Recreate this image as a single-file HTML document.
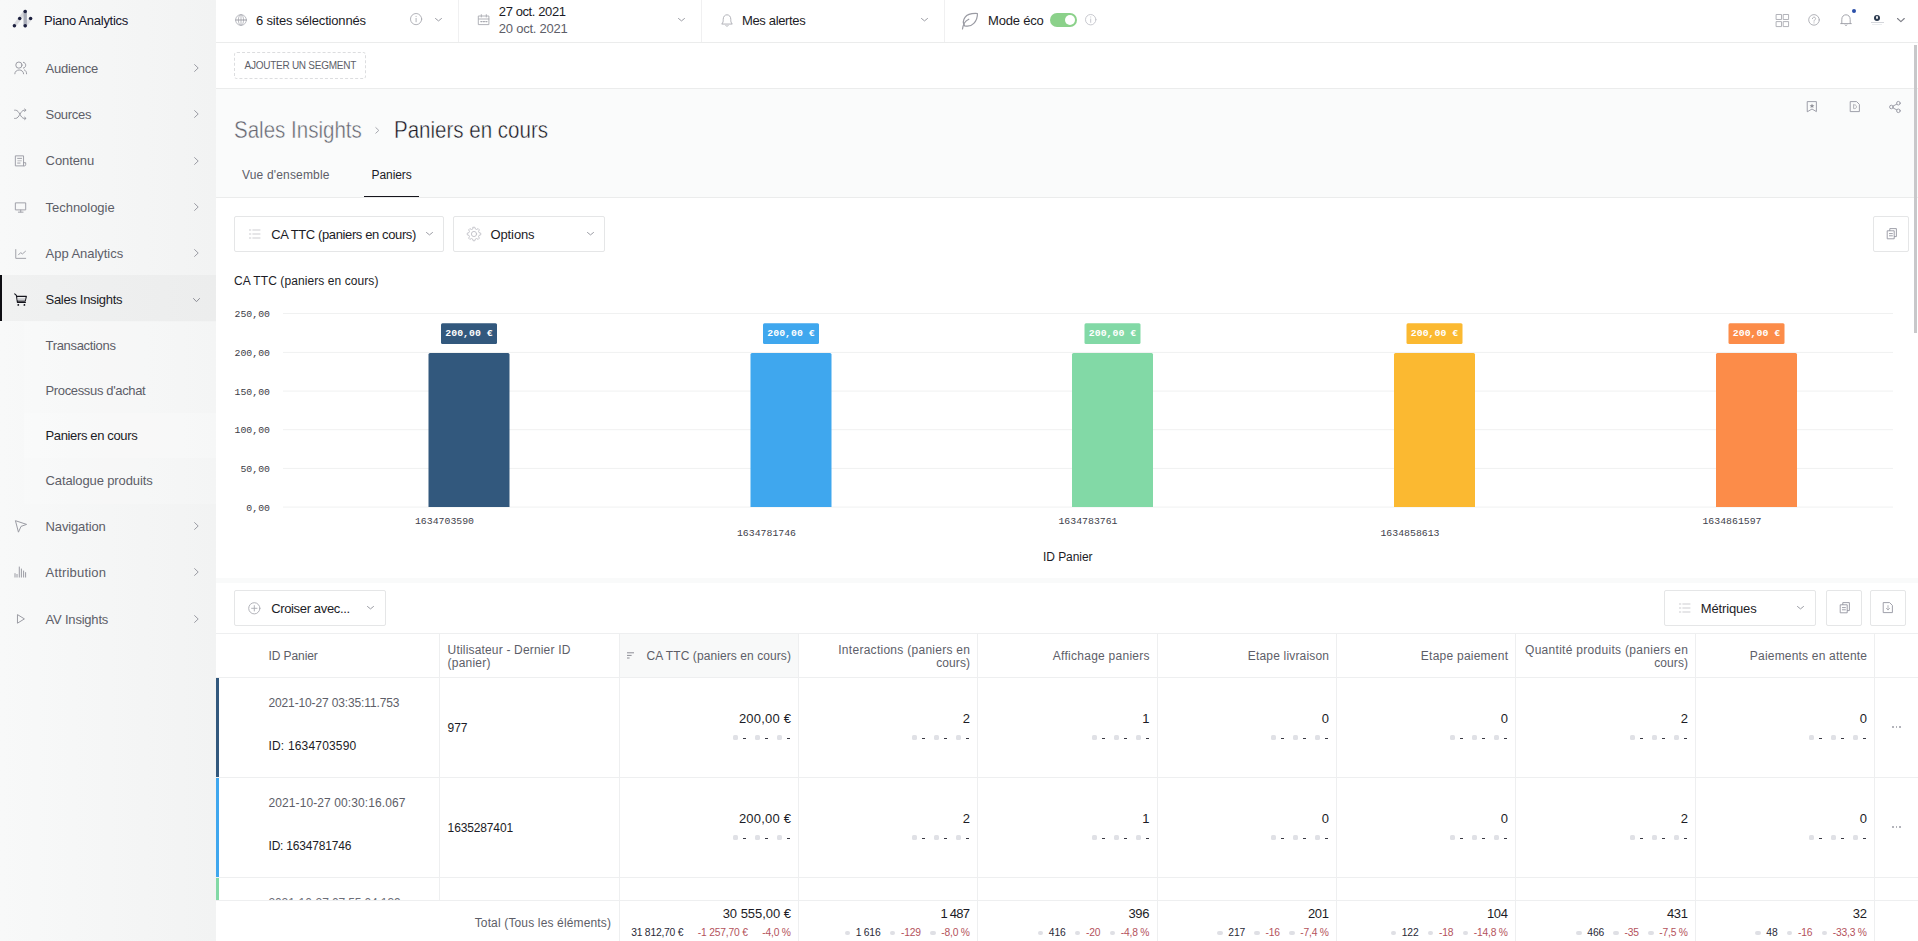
<!DOCTYPE html><html lang="fr"><head><meta charset="utf-8"><title>Piano Analytics - Paniers en cours</title><style>
*{box-sizing:border-box;margin:0;padding:0}
html,body{width:1918px;height:941px;overflow:hidden;background:#fff}
body{font-family:"Liberation Sans",sans-serif;font-size:13px;color:#1c1c26;position:relative}
.a{position:absolute}
.t{position:absolute;white-space:nowrap;line-height:1}
.box{position:absolute;border:1px solid #e5e6e7;border-radius:2px;background:#fff}
svg{position:absolute;overflow:visible}
.vl{position:absolute;width:1px;background:#eeeff0}
.hl{position:absolute;height:1px;background:#ebecec}
.i{fill:none;stroke:#9b9ca4;stroke-width:1;stroke-linecap:round;stroke-linejoin:round}
</style></head><body>
<aside><nav>
<div class="a" style="left:0;top:0;width:216px;height:941px;background:linear-gradient(90deg,#f8f9f9 0%,#f2f3f3 100%)"></div>
<div class="a" style="left:0;top:275px;width:216px;height:46px;background:linear-gradient(90deg,#f0f1f1,#eceded)"></div>
<div class="a" style="left:0;top:275px;width:2px;height:46px;background:#0d0d12"></div>
<div class="a" style="left:24px;top:322px;width:192px;height:182px;background:rgba(255,255,255,.2)"></div>
<div class="a" style="left:24px;top:413px;width:192px;height:45px;background:rgba(255,255,255,.22)"></div>
<svg style="left:10px;top:6px" width="26" height="24" viewBox="0 0 26 24">
<path d="M4.4 19.7 L15.2 5.4" stroke="#d9dade" stroke-width="3.4" stroke-linecap="round"/>
<path d="M15.2 19.7 L20.6 12.5" stroke="#dfe0e4" stroke-width="3.4" stroke-linecap="round"/>
<path d="M15.2 5.4 L15.2 19.7" stroke="#a9adb9" stroke-width="3.4" stroke-linecap="round"/>
<g fill="#1d2140"><circle cx="15.2" cy="5.4" r="1.75"/><circle cx="9.7" cy="12.5" r="1.75"/><circle cx="20.6" cy="12.5" r="1.75"/><circle cx="4.4" cy="19.7" r="1.75"/><circle cx="15.2" cy="19.7" r="1.75"/></g></svg>
<div class="t" style="top:14.20px;font-size:13px;color:#15152a;letter-spacing:-0.278px;left:44.00px;">Piano Analytics</div>
<div class="t" style="top:61.80px;font-size:13px;color:#5d5e68;letter-spacing:-0.215px;left:45.60px;">Audience</div>
<svg style="left:194.1px;top:64.0px" width="5" height="8" viewBox="0 0 5 8"><path class="i" style="stroke:#9b9ca4" d="M0.6 0.6 L4.2 4 L0.6 7.4"/></svg>
<div class="t" style="top:108.00px;font-size:13px;color:#5d5e68;letter-spacing:-0.315px;left:45.60px;">Sources</div>
<svg style="left:194.1px;top:110.2px" width="5" height="8" viewBox="0 0 5 8"><path class="i" style="stroke:#9b9ca4" d="M0.6 0.6 L4.2 4 L0.6 7.4"/></svg>
<div class="t" style="top:154.30px;font-size:13px;color:#5d5e68;letter-spacing:-0.094px;left:45.60px;">Contenu</div>
<svg style="left:194.1px;top:156.5px" width="5" height="8" viewBox="0 0 5 8"><path class="i" style="stroke:#9b9ca4" d="M0.6 0.6 L4.2 4 L0.6 7.4"/></svg>
<div class="t" style="top:200.70px;font-size:13px;color:#5d5e68;letter-spacing:-0.036px;left:45.60px;">Technologie</div>
<svg style="left:194.1px;top:202.89999999999998px" width="5" height="8" viewBox="0 0 5 8"><path class="i" style="stroke:#9b9ca4" d="M0.6 0.6 L4.2 4 L0.6 7.4"/></svg>
<div class="t" style="top:246.90px;font-size:13px;color:#5d5e68;letter-spacing:-0.042px;left:45.60px;">App Analytics</div>
<svg style="left:194.1px;top:249.1px" width="5" height="8" viewBox="0 0 5 8"><path class="i" style="stroke:#9b9ca4" d="M0.6 0.6 L4.2 4 L0.6 7.4"/></svg>
<div class="t" style="top:293.10px;font-size:13px;color:#1c1c26;letter-spacing:-0.310px;left:45.60px;">Sales Insights</div>
<svg style="left:193.00px;top:298.30px" width="7" height="4.2" viewBox="0 0 7 4.2"><path class="i" style="stroke:#8d8e96;stroke-width:1" d="M0.5 0.5 L3.5 3.7 L6.5 0.5"/></svg>
<div class="t" style="top:519.70px;font-size:13px;color:#5d5e68;letter-spacing:-0.144px;left:45.60px;">Navigation</div>
<svg style="left:194.1px;top:521.9000000000001px" width="5" height="8" viewBox="0 0 5 8"><path class="i" style="stroke:#9b9ca4" d="M0.6 0.6 L4.2 4 L0.6 7.4"/></svg>
<div class="t" style="top:565.90px;font-size:13px;color:#5d5e68;letter-spacing:0.178px;left:45.60px;">Attribution</div>
<svg style="left:194.1px;top:568.1px" width="5" height="8" viewBox="0 0 5 8"><path class="i" style="stroke:#9b9ca4" d="M0.6 0.6 L4.2 4 L0.6 7.4"/></svg>
<div class="t" style="top:612.50px;font-size:13px;color:#5d5e68;letter-spacing:-0.209px;left:45.60px;">AV Insights</div>
<svg style="left:194.1px;top:614.7px" width="5" height="8" viewBox="0 0 5 8"><path class="i" style="stroke:#9b9ca4" d="M0.6 0.6 L4.2 4 L0.6 7.4"/></svg>
<div class="t" style="top:339.10px;font-size:13px;color:#5d5e68;letter-spacing:-0.320px;left:45.50px;">Transactions</div>
<div class="t" style="top:384.10px;font-size:13px;color:#5d5e68;letter-spacing:-0.349px;left:45.50px;">Processus d'achat</div>
<div class="t" style="top:429.10px;font-size:13px;color:#1c1c26;letter-spacing:-0.360px;left:45.50px;">Paniers en cours</div>
<div class="t" style="top:474.10px;font-size:13px;color:#5d5e68;letter-spacing:-0.113px;left:45.50px;">Catalogue produits</div>
<svg style="left:14px;top:61px" width="14" height="14" viewBox="0 0 14 14"><circle class="i" cx="4.9" cy="4.1" r="3.1"/><path class="i" d="M0.8 12.8 C0.8 7.6 9.6 7.6 9.6 12.8"/><path class="i" d="M9.4 1.3 C12.6 1.6 12.6 6.8 9.4 7.1"/><path class="i" d="M10.4 8.9 C11.9 9.6 12.6 11 12.6 12.8"/></svg>
<svg style="left:14px;top:107.5px" width="14" height="13" viewBox="0 0 14 13"><path class="i" d="M0.6 2.2 H1.6 C5.4 2.2 6.4 10.4 10.2 10.4 H11.8"/><path class="i" d="M0.6 10.4 H1.6 C5.4 10.4 6.4 2.2 10.2 2.2 H11.8"/><path class="i" d="M10.6 1 L12 2.2 L10.6 3.4"/><path class="i" d="M10.6 9.2 L12 10.4 L10.6 11.6"/></svg>
<svg style="left:14.6px;top:155px" width="12.2" height="12.2" viewBox="0 0 13 13"><path class="i" d="M0.8 0.9 H9.1 V11.6 H0.8 Z"/><path class="i" d="M9.1 8.2 H11.4 V10.4 C11.4 11.2 10.8 11.6 10.2 11.6 H9.1"/><path class="i" d="M2.8 3.6 H7 M2.8 8.6 H5.4"/><path d="M2.6 5.4 H7.2 V6.8 H2.6 Z" fill="#c9cace"/></svg>
<svg style="left:14.6px;top:201.8px" width="12.2" height="11.3" viewBox="0 0 13 12"><path class="i" d="M0.8 0.9 H11.4 V8.4 H0.8 Z"/><path class="i" d="M6.1 8.6 V10.6 M3.6 10.8 H8.6"/></svg>
<svg style="left:14.6px;top:248.6px" width="12.2" height="10.3" viewBox="0 0 13 11"><path class="i" d="M0.8 0.6 V10 H11.4"/><path class="i" d="M3.8 6.2 L6 3.9 L7.9 5.3 L11.2 2.4"/></svg>
<svg style="left:13.5px;top:293.4px" width="14" height="14" viewBox="0 0 14 14"><path d="M0.7 0.8 L2.4 2.4 L3.4 9.4 H11.4 M2.6 3.4 H12.4 L11.2 8 H3.2" fill="none" stroke="#14141c" stroke-width="1.1" stroke-linejoin="round" stroke-linecap="round"/><path d="M3.6 5.2 H11.4 L11 7.2 H3.8Z" fill="#c9cace"/><circle cx="4.3" cy="11.9" r="0.9" fill="#14141c"/><circle cx="10.4" cy="11.9" r="0.9" fill="#14141c"/></svg>
<svg style="left:14.5px;top:519.5px" width="13" height="13" viewBox="0 0 13 13"><path class="i" d="M0.8 0.8 L11.6 4.4 L6 6.4 L3.6 11.8 Z"/></svg>
<svg style="left:14px;top:566px" width="13" height="12.5" viewBox="0 0 13 12.5"><path class="i" style="stroke-linecap:butt" d="M1 7.2 V11.5 M3 8 V11.5 M5.3 0.6 V11.5 M7.4 2.6 V11.5 M9.6 4.6 V11.5 M11.6 6.2 V11.5"/></svg>
<svg style="left:17px;top:613.8px" width="9" height="10" viewBox="0 0 9 10"><path class="i" d="M0.8 0.8 L7.4 4.9 L0.8 9 Z"/></svg>
</nav></aside>
<header>
<div class="hl" style="left:216px;top:42px;width:1702px"></div>
<div class="hl" style="left:216px;top:88px;width:1702px"></div>
<div class="vl" style="left:458px;top:0;height:42px;background:#f0f0f1"></div>
<div class="vl" style="left:701px;top:0;height:42px;background:#f0f0f1"></div>
<div class="vl" style="left:944px;top:0;height:42px;background:#f0f0f1"></div>
<svg style="left:234.5px;top:13.5px" width="12" height="12" viewBox="0 0 12 12"><g class="i" style="stroke:#b4b5bc;stroke-width:.9"><circle cx="6" cy="6" r="5.4"/><ellipse cx="6" cy="6" rx="2.6" ry="5.4"/><path d="M6 0.6 V11.4"/><path d="M0.6 6 H11.4" style="stroke:#9fa0a8;stroke-width:1.1"/></g></svg>
<div class="t" style="top:14.00px;font-size:13px;color:#1c1c26;letter-spacing:-0.183px;left:256.00px;">6 sites sélectionnés</div>
<svg style="left:409.7px;top:13.200000000000001px" width="12.2" height="12.2" viewBox="0 0 12.2 12.2"><g class="i" style="stroke:#a9aab1;stroke-width:.9"><circle cx="6.1" cy="6.1" r="5.6"/><path d="M6.1 5.3999999999999995 V8.8"/><path d="M6.1 3.3 v.2"/></g></svg>
<svg style="left:434.70px;top:17.70px" width="7.0" height="3.4" viewBox="0 0 7.0 3.4"><path class="i" style="stroke:#9b9ca4;stroke-width:1" d="M0.5 0.5 L3.5 2.9 L6.5 0.5"/></svg>
<svg style="left:477.5px;top:13.7px" width="12" height="12" viewBox="0 0 12 12"><g class="i" style="stroke:#a9aab1;stroke-width:.9"><path d="M0.7 2 H10.9 V10.6 H0.7 Z"/><path d="M0.7 5 H10.9"/><path d="M3.3 0.6 V3 M8.3 0.6 V3"/><path d="M2.8 7.6 h1.2 M5.3 7.6 h1.2 M7.8 7.6 h1.2" style="stroke-width:1.1"/></g></svg>
<div class="t" style="top:4.90px;font-size:13px;color:#1c1c26;letter-spacing:-0.397px;left:498.80px;">27 oct. 2021</div>
<div class="t" style="top:21.80px;font-size:13px;color:#5d5e68;letter-spacing:-0.230px;left:498.80px;">20 oct. 2021</div>
<svg style="left:677.80px;top:17.70px" width="7.0" height="3.4" viewBox="0 0 7.0 3.4"><path class="i" style="stroke:#9b9ca4;stroke-width:1" d="M0.5 0.5 L3.5 2.9 L6.5 0.5"/></svg>
<svg style="left:720.5px;top:13.5px" width="12" height="14" viewBox="0 0 12 14"><g class="i" style="stroke:#a9aab1;stroke-width:.9"><path d="M1 9.8 C2.2 8.6 2.2 7.4 2.2 5.4 C2.2 2.6 3.8 0.8 6 0.8 C8.2 0.8 9.8 2.6 9.8 5.4 C9.8 7.4 9.8 8.6 11 9.8 Z"/><path d="M4.8 11.6 C5.3 12.6 6.7 12.6 7.2 11.6"/></g></svg>
<div class="t" style="top:14.20px;font-size:13px;color:#1c1c26;letter-spacing:-0.355px;left:742.00px;">Mes alertes</div>
<svg style="left:920.80px;top:17.70px" width="7.0" height="3.4" viewBox="0 0 7.0 3.4"><path class="i" style="stroke:#9b9ca4;stroke-width:1" d="M0.5 0.5 L3.5 2.9 L6.5 0.5"/></svg>
<svg style="left:961px;top:11.5px" width="18" height="18" viewBox="0 0 18 18"><g class="i" style="stroke:#9a9ba3;stroke-width:1.2"><path d="M16.4 1.5 C11 1.2 6.4 2 4 5.4 C2 8.2 2 11.4 3.6 13.8 C7 14.6 10.4 14 12.8 11.4 C15.4 8.6 16.6 5.4 16.4 1.5 Z"/><path d="M1.5 17 C1.9 14.6 2.4 12.8 3.4 11 C4.4 9.4 5.8 8.2 7.8 7.2"/></g></svg>
<div class="t" style="top:14.20px;font-size:13px;color:#1c1c26;letter-spacing:-0.199px;left:988.00px;">Mode éco</div>
<div class="a" style="left:1050px;top:12.5px;width:27px;height:14px;border-radius:7px;background:#8bd18a"></div>
<div class="a" style="left:1064.5px;top:14.5px;width:10px;height:10px;border-radius:5px;background:#fff"></div>
<svg style="left:1085.1px;top:13.600000000000001px" width="11.4" height="11.4" viewBox="0 0 11.4 11.4"><g class="i" style="stroke:#c2c3c9;stroke-width:.9"><circle cx="5.7" cy="5.7" r="5.2"/><path d="M5.7 5.0 V8.4"/><path d="M5.7 2.9000000000000004 v.2"/></g></svg>
<svg style="left:1776px;top:13.8px" width="13.4" height="13.4" viewBox="0 0 13.4 13.4"><g class="i" style="stroke:#a9aab1;stroke-width:.9"><rect x=".5" y=".5" width="5" height="5"/><rect x="7.6" y=".5" width="5" height="5"/><rect x=".5" y="7.6" width="5" height="5"/><rect x="7.6" y="7.6" width="5" height="5"/></g></svg>
<svg style="left:1808px;top:13.5px" width="12" height="12" viewBox="0 0 12 12"><g class="i" style="stroke:#a9aab1;stroke-width:.9"><circle cx="6" cy="5.9" r="5.3"/><path d="M4.4 4.6 C4.4 2.6 7.6 2.6 7.6 4.6 C7.6 5.8 6 5.8 6 7.2"/><path d="M6 8.8 v.2"/></g></svg>
<svg style="left:1839.5px;top:13.5px" width="12" height="14" viewBox="0 0 12 14"><g class="i" style="stroke:#9b9ca4;stroke-width:.9"><path d="M0.7 9.6 H11.3 M1.8 9.6 V5.4 C1.8 2.6 3.6 0.8 6 0.8 C8.4 0.8 10.2 2.6 10.2 5.4 V9.6"/><path d="M5.2 10.8 L6 11.8 L6.8 10.8"/></g></svg>
<div class="a" style="left:1851.9px;top:9px;width:4.2px;height:4.2px;border-radius:3px;background:#2a4fa8"></div>
<div class="a" style="left:1873.7px;top:14.5px;width:6.4px;height:6.4px;border-radius:4px;background:#2b3a4e"></div>
<div class="a" style="left:1876.3px;top:16px;width:1.4px;height:3px;border-radius:1px;background:#e8eaee"></div>
<div class="a" style="left:1870.5px;top:22px;width:13px;height:1px;background:#d4d6db"></div>
<div class="a" style="left:1872px;top:24px;width:10px;height:1px;background:#eceef0"></div>
<svg style="left:1897.10px;top:17.90px" width="7.8" height="4.2" viewBox="0 0 7.8 4.2"><path class="i" style="stroke:#7d7e86;stroke-width:1.1" d="M0.5 0.5 L3.9 3.7 L7.3 0.5"/></svg>
<div class="a" style="left:234px;top:52px;width:132px;height:27px;border:1px dashed #dcdddf;border-radius:3px"></div>
<div class="t" style="top:60.50px;font-size:10px;color:#5d5e68;letter-spacing:-0.257px;left:244.50px;">AJOUTER UN SEGMENT</div>
</header><main>
<section>
<div class="a" style="left:216px;top:89px;width:1702px;height:108px;background:#fafbfb"></div>
<div class="hl" style="left:216px;top:197px;width:1702px"></div>
<div class="t" style="left:234px;top:118px;font-size:24px;color:#63646e;-webkit-text-stroke:.45px #fafbfb;transform:scaleX(.855);transform-origin:0 50%">Sales Insights</div>
<svg style="left:375.2px;top:127px" width="5" height="7" viewBox="0 0 5 7"><path class="i" style="stroke:#a6a7ae" d="M0.8 0.6 L3.8 3.4 L0.8 6.2"/></svg>
<div class="t" style="left:394px;top:118px;font-size:24px;color:#16161f;-webkit-text-stroke:.45px #fafbfb;transform:scaleX(.855);transform-origin:0 50%">Paniers en cours</div>
<div class="t" style="top:169.00px;font-size:12px;color:#5d5e68;letter-spacing:0.168px;left:242.00px;">Vue d'ensemble</div>
<div class="t" style="top:169.00px;font-size:12px;color:#1c1c26;letter-spacing:-0.098px;left:371.60px;">Paniers</div>
<div class="a" style="left:364px;top:196px;width:55px;height:1px;background:#15151c"></div>
<svg style="left:1807px;top:101px" width="10" height="11.5" viewBox="0 0 10 11.5"><g class="i" style="stroke:#9495a0;stroke-width:.9"><path d="M0.6 0.6 H9.4 V10.6 L5 8 L0.6 10.6 Z"/></g><path d="M5 2.6 L5.7 4.2 L7.4 4.3 L6.1 5.4 L6.5 7 L5 6.1 L3.5 7 L3.9 5.4 L2.6 4.3 L4.3 4.2 Z" fill="#8d8e96"/></svg>
<svg style="left:1850px;top:101px" width="10" height="11.5" viewBox="0 0 10 11.5"><g class="i" style="stroke:#9495a0;stroke-width:.9"><path d="M0.6 0.6 H6.6 L9.4 3.4 V10.6 H0.6 Z"/><path d="M3.6 3.8 V7.6 H4.6 C7.2 7.6 7.2 3.8 4.6 3.8 Z" style="stroke:#a9aab1"/></g></svg>
<svg style="left:1889px;top:101px" width="12" height="12" viewBox="0 0 12 12"><g class="i" style="stroke:#9495a0;stroke-width:.9"><circle cx="2.4" cy="6" r="1.8"/><circle cx="9.4" cy="2.2" r="1.8"/><circle cx="9.4" cy="9.8" r="1.8"/><path d="M4 5.1 L7.8 3.1 M4 6.9 L7.8 8.9"/></g></svg>
</section>
<section>
<div class="box" style="left:234px;top:216px;width:210px;height:36px"></div>
<div class="box" style="left:453px;top:216px;width:152px;height:36px"></div>
<div class="box" style="left:1873px;top:216px;width:36px;height:36px"></div>
<svg style="left:248.8px;top:229px" width="12" height="10" viewBox="0 0 12 10"><g stroke="#cdced1" stroke-width="1.2"><path d="M0 1 h2.2 M3.4 1 h8 M0 5 h2.2 M3.4 5 h8 M0 9 h2.2 M3.4 9 h8"/></g></svg>
<div class="t" style="top:228.10px;font-size:13px;color:#1c1c26;letter-spacing:-0.387px;left:271.20px;">CA TTC (paniers en cours)</div>
<svg style="left:425.80px;top:231.70px" width="7.0" height="3.4" viewBox="0 0 7.0 3.4"><path class="i" style="stroke:#9b9ca4;stroke-width:1" d="M0.5 0.5 L3.5 2.9 L6.5 0.5"/></svg>
<svg style="left:466.9px;top:226.9px" width="14" height="14" viewBox="0 0 14 14"><g class="i" style="stroke:#bfc0c6;stroke-width:.9"><path d="M6.15 0.25 L7.85 0.25 L8.37 1.98 L9.58 2.48 L11.17 1.63 L12.37 2.83 L11.52 4.42 L12.02 5.63 L13.75 6.15 L13.75 7.85 L12.02 8.37 L11.52 9.58 L12.37 11.17 L11.17 12.37 L9.58 11.52 L8.37 12.02 L7.85 13.75 L6.15 13.75 L5.63 12.02 L4.42 11.52 L2.83 12.37 L1.63 11.17 L2.48 9.58 L1.98 8.37 L0.25 7.85 L0.25 6.15 L1.98 5.63 L2.48 4.42 L1.63 2.83 L2.83 1.63 L4.42 2.48 L5.63 1.98 Z"/><circle cx="7" cy="7" r="2.6"/></g></svg>
<div class="t" style="top:228.10px;font-size:13px;color:#1c1c26;letter-spacing:-0.116px;left:490.50px;">Options</div>
<svg style="left:586.80px;top:231.70px" width="7.0" height="3.4" viewBox="0 0 7.0 3.4"><path class="i" style="stroke:#9b9ca4;stroke-width:1" d="M0.5 0.5 L3.5 2.9 L6.5 0.5"/></svg>
<svg style="left:1886.5px;top:228px" width="10" height="11.5" viewBox="0 0 10 11.5"><g class="i" style="stroke:#9495a0;stroke-width:.9"><path d="M2.8 2.6 V0.6 H9.4 V8.6 H7.4"/><path d="M0.6 2.8 H7.2 V10.8 H0.6 Z"/><path d="M2.4 5.6 H5.4 M2.4 7.8 H5.4"/></g></svg>
<div class="t" style="top:275.00px;font-size:12px;color:#1c1c26;letter-spacing:0.080px;left:234.00px;">CA TTC (paniers en cours)</div>
<div class="a" style="left:216px;top:578px;width:1702px;height:5px;background:#f9fafa"></div>
<svg style="left:0;top:0" width="1918" height="941" viewBox="0 0 1918 941"><line x1="283" x2="1893" y1="313.5" y2="313.5" stroke="#f0f1f1" stroke-width="1"/><text x="270" y="317" text-anchor="end" font-family="Liberation Mono, monospace" font-size="9.85" fill="#3c3c46">250,00</text><line x1="283" x2="1893" y1="352.4" y2="352.4" stroke="#f0f1f1" stroke-width="1"/><text x="270" y="356" text-anchor="end" font-family="Liberation Mono, monospace" font-size="9.85" fill="#3c3c46">200,00</text><line x1="283" x2="1893" y1="391.1" y2="391.1" stroke="#f0f1f1" stroke-width="1"/><text x="270" y="394.5" text-anchor="end" font-family="Liberation Mono, monospace" font-size="9.85" fill="#3c3c46">150,00</text><line x1="283" x2="1893" y1="429.7" y2="429.7" stroke="#f0f1f1" stroke-width="1"/><text x="270" y="433" text-anchor="end" font-family="Liberation Mono, monospace" font-size="9.85" fill="#3c3c46">100,00</text><line x1="283" x2="1893" y1="468.4" y2="468.4" stroke="#f0f1f1" stroke-width="1"/><text x="270" y="472" text-anchor="end" font-family="Liberation Mono, monospace" font-size="9.85" fill="#3c3c46">50,00</text><line x1="283" x2="1893" y1="507.1" y2="507.1" stroke="#f0f1f1" stroke-width="1"/><text x="270" y="510.5" text-anchor="end" font-family="Liberation Mono, monospace" font-size="9.85" fill="#3c3c46">0,00</text><path d="M428.5 507 V354.5 q0 -1.5 1.5 -1.5 h78 q1.5 0 1.5 1.5 V507 Z" fill="#32587d"/><rect x="441.0" y="323.3" width="56" height="20.6" rx="1.5" fill="#32587d"/><text x="469.0" y="336" text-anchor="middle" font-family="Liberation Mono, monospace" font-weight="bold" font-size="9.85" fill="#fff">200,00 €</text><text x="444.5" y="524" text-anchor="middle" font-family="Liberation Mono, monospace" font-size="9.85" fill="#41414b">1634703590</text><path d="M750.5 507 V354.5 q0 -1.5 1.5 -1.5 h78 q1.5 0 1.5 1.5 V507 Z" fill="#3fa7ee"/><rect x="763.0" y="323.3" width="56" height="20.6" rx="1.5" fill="#3fa7ee"/><text x="791.0" y="336" text-anchor="middle" font-family="Liberation Mono, monospace" font-weight="bold" font-size="9.85" fill="#fff">200,00 €</text><text x="766.5" y="536" text-anchor="middle" font-family="Liberation Mono, monospace" font-size="9.85" fill="#41414b">1634781746</text><path d="M1072 507 V354.5 q0 -1.5 1.5 -1.5 h78 q1.5 0 1.5 1.5 V507 Z" fill="#82d9a6"/><rect x="1084.5" y="323.3" width="56" height="20.6" rx="1.5" fill="#82d9a6"/><text x="1112.5" y="336" text-anchor="middle" font-family="Liberation Mono, monospace" font-weight="bold" font-size="9.85" fill="#fff">200,00 €</text><text x="1088.0" y="524" text-anchor="middle" font-family="Liberation Mono, monospace" font-size="9.85" fill="#41414b">1634783761</text><path d="M1394 507 V354.5 q0 -1.5 1.5 -1.5 h78 q1.5 0 1.5 1.5 V507 Z" fill="#fbb931"/><rect x="1406.5" y="323.3" width="56" height="20.6" rx="1.5" fill="#fbb931"/><text x="1434.5" y="336" text-anchor="middle" font-family="Liberation Mono, monospace" font-weight="bold" font-size="9.85" fill="#fff">200,00 €</text><text x="1410.0" y="536" text-anchor="middle" font-family="Liberation Mono, monospace" font-size="9.85" fill="#41414b">1634858613</text><path d="M1716 507 V354.5 q0 -1.5 1.5 -1.5 h78 q1.5 0 1.5 1.5 V507 Z" fill="#fc8c49"/><rect x="1728.5" y="323.3" width="56" height="20.6" rx="1.5" fill="#fc8c49"/><text x="1756.5" y="336" text-anchor="middle" font-family="Liberation Mono, monospace" font-weight="bold" font-size="9.85" fill="#fff">200,00 €</text><text x="1732.0" y="524" text-anchor="middle" font-family="Liberation Mono, monospace" font-size="9.85" fill="#41414b">1634861597</text></svg>
<div class="t" style="top:551.00px;font-size:12px;color:#1c1c26;letter-spacing:-0.059px;left:1043.00px;">ID Panier</div>
</section>
<section>
<div class="box" style="left:234px;top:590px;width:152px;height:36px"></div>
<div class="box" style="left:1664px;top:590px;width:152px;height:36px"></div>
<div class="box" style="left:1826px;top:590px;width:36px;height:36px"></div>
<div class="box" style="left:1870px;top:590px;width:36px;height:36px"></div>
<svg style="left:248px;top:602px" width="13" height="13" viewBox="0 0 13 13"><g class="i" style="stroke:#a9aab1;stroke-width:.9"><circle cx="6.3" cy="6.3" r="5.6"/><path d="M6.3 3.6 V9 M3.6 6.3 H9"/></g></svg>
<div class="t" style="top:602.30px;font-size:13px;color:#1c1c26;letter-spacing:-0.354px;left:271.20px;">Croiser avec...</div>
<svg style="left:366.80px;top:605.90px" width="7.0" height="3.4" viewBox="0 0 7.0 3.4"><path class="i" style="stroke:#9b9ca4;stroke-width:1" d="M0.5 0.5 L3.5 2.9 L6.5 0.5"/></svg>
<svg style="left:1678.8px;top:603px" width="12" height="10" viewBox="0 0 12 10"><g stroke="#cdced1" stroke-width="1.2"><path d="M0 1 h2.2 M3.4 1 h8 M0 5 h2.2 M3.4 5 h8 M0 9 h2.2 M3.4 9 h8"/></g></svg>
<div class="t" style="top:602.30px;font-size:13px;color:#1c1c26;letter-spacing:-0.153px;left:1700.80px;">Métriques</div>
<svg style="left:1797.00px;top:606.00px" width="7.0" height="3.4" viewBox="0 0 7.0 3.4"><path class="i" style="stroke:#9b9ca4;stroke-width:1" d="M0.5 0.5 L3.5 2.9 L6.5 0.5"/></svg>
<svg style="left:1839.8px;top:602px" width="10" height="11.5" viewBox="0 0 10 11.5"><g class="i" style="stroke:#9495a0;stroke-width:.9"><path d="M2.8 2.6 V0.6 H9.4 V8.6 H7.4"/><path d="M0.6 2.8 H7.2 V10.8 H0.6 Z"/><path d="M2.4 5.6 H5.4 M2.4 7.8 H5.4"/></g></svg>
<svg style="left:1882.8px;top:602px" width="10" height="11.5" viewBox="0 0 10 11.5"><g class="i" style="stroke:#9495a0;stroke-width:.9"><path d="M0.6 0.6 H6.6 L9.4 3.4 V10.6 H0.6 Z"/><path d="M5 3.6 V7.8 M3.4 6.4 L5 8 L6.6 6.4" style="stroke:#a9aab1"/></g></svg>
<div class="a" style="left:620px;top:634px;width:178px;height:43px;background:#f8f9f9"></div>
<div class="hl" style="left:216px;top:633px;width:1702px;background:#eeeff0"></div>
<div class="hl" style="left:216px;top:677px;width:1702px;background:#eeeff0"></div>
<div class="hl" style="left:216px;top:777px;width:1702px;background:#eeeff0"></div>
<div class="hl" style="left:216px;top:877px;width:1702px;background:#eeeff0"></div>
<div class="vl" style="left:439px;top:634px;height:307px"></div>
<div class="vl" style="left:619px;top:634px;height:307px"></div>
<div class="vl" style="left:798px;top:634px;height:307px"></div>
<div class="vl" style="left:977px;top:634px;height:307px"></div>
<div class="vl" style="left:1157px;top:634px;height:307px"></div>
<div class="vl" style="left:1336px;top:634px;height:307px"></div>
<div class="vl" style="left:1515px;top:634px;height:307px"></div>
<div class="vl" style="left:1695px;top:634px;height:307px"></div>
<div class="vl" style="left:1874px;top:634px;height:307px"></div>
<div class="t" style="top:649.70px;font-size:12px;color:#5d5e68;letter-spacing:-0.092px;left:268.50px;">ID Panier</div>
<div class="t" style="top:644.00px;font-size:12px;color:#5d5e68;letter-spacing:0.175px;left:447.60px;">Utilisateur - Dernier ID</div>
<div class="t" style="top:657.00px;font-size:12px;color:#5d5e68;letter-spacing:0.205px;left:447.60px;">(panier)</div>
<svg style="left:626.5px;top:652px" width="8" height="7" viewBox="0 0 8 7"><g stroke="#8d8e96" stroke-width="1"><path d="M0 .8 h7 M0 3.4 h4.6 M0 6 h2.6"/></g></svg>
<div class="t" style="top:649.70px;font-size:12px;color:#5d5e68;letter-spacing:0.080px;left:646.50px;">CA TTC (paniers en cours)</div>
<div class="t" style="top:644.00px;font-size:12px;color:#5d5e68;letter-spacing:0.275px;right:947.73px;text-align:right;">Interactions (paniers en</div>
<div class="t" style="top:657.00px;font-size:12px;color:#5d5e68;letter-spacing:0.109px;right:947.89px;text-align:right;">cours)</div>
<div class="t" style="top:649.70px;font-size:12px;color:#5d5e68;letter-spacing:0.258px;right:768.24px;text-align:right;">Affichage paniers</div>
<div class="t" style="top:649.70px;font-size:12px;color:#5d5e68;letter-spacing:0.179px;right:588.82px;text-align:right;">Etape livraison</div>
<div class="t" style="top:649.70px;font-size:12px;color:#5d5e68;letter-spacing:0.238px;right:409.76px;text-align:right;">Etape paiement</div>
<div class="t" style="top:644.00px;font-size:12px;color:#5d5e68;letter-spacing:0.294px;right:229.71px;text-align:right;">Quantité produits (paniers en</div>
<div class="t" style="top:657.00px;font-size:12px;color:#5d5e68;letter-spacing:0.109px;right:229.89px;text-align:right;">cours)</div>
<div class="t" style="top:649.70px;font-size:12px;color:#5d5e68;letter-spacing:0.199px;right:50.80px;text-align:right;">Paiements en attente</div>
<div class="a" style="left:216px;top:678px;width:3px;height:99px;background:#32587d"></div>
<div class="t" style="top:696.80px;font-size:12px;color:#5d5e68;letter-spacing:-0.135px;left:268.50px;">2021-10-27 03:35:11.753</div>
<div class="t" style="top:739.80px;font-size:12px;color:#1c1c26;letter-spacing:0.178px;left:268.50px;">ID: 1634703590</div>
<div class="t" style="top:721.80px;font-size:12px;color:#1c1c26;letter-spacing:-0.077px;left:447.60px;">977</div>
<div class="t" style="top:712.10px;font-size:13px;color:#1c1c26;letter-spacing:0.211px;right:1126.79px;text-align:right;">200,00 €</div>
<div class="a" style="left:733.0px;top:735px;width:5px;height:5px;border-radius:1.6px;background:#e0e1e6"></div>
<div class="a" style="left:743.0px;top:738px;width:3px;height:1px;background:#3a3a44"></div>
<div class="a" style="left:755.0px;top:735px;width:5px;height:5px;border-radius:1.6px;background:#e0e1e6"></div>
<div class="a" style="left:765.0px;top:738px;width:3px;height:1px;background:#3a3a44"></div>
<div class="a" style="left:777.0px;top:735px;width:5px;height:5px;border-radius:1.6px;background:#e0e1e6"></div>
<div class="a" style="left:787.0px;top:738px;width:3px;height:1px;background:#3a3a44"></div>
<div class="t" style="top:712.10px;font-size:13px;color:#1c1c26;right:948.00px;text-align:right;">2</div>
<div class="a" style="left:912.0px;top:735px;width:5px;height:5px;border-radius:1.6px;background:#e0e1e6"></div>
<div class="a" style="left:922.0px;top:738px;width:3px;height:1px;background:#3a3a44"></div>
<div class="a" style="left:934.0px;top:735px;width:5px;height:5px;border-radius:1.6px;background:#e0e1e6"></div>
<div class="a" style="left:944.0px;top:738px;width:3px;height:1px;background:#3a3a44"></div>
<div class="a" style="left:956.0px;top:735px;width:5px;height:5px;border-radius:1.6px;background:#e0e1e6"></div>
<div class="a" style="left:966.0px;top:738px;width:3px;height:1px;background:#3a3a44"></div>
<div class="t" style="top:712.10px;font-size:13px;color:#1c1c26;right:768.50px;text-align:right;">1</div>
<div class="a" style="left:1091.5px;top:735px;width:5px;height:5px;border-radius:1.6px;background:#e0e1e6"></div>
<div class="a" style="left:1101.5px;top:738px;width:3px;height:1px;background:#3a3a44"></div>
<div class="a" style="left:1113.5px;top:735px;width:5px;height:5px;border-radius:1.6px;background:#e0e1e6"></div>
<div class="a" style="left:1123.5px;top:738px;width:3px;height:1px;background:#3a3a44"></div>
<div class="a" style="left:1135.5px;top:735px;width:5px;height:5px;border-radius:1.6px;background:#e0e1e6"></div>
<div class="a" style="left:1145.5px;top:738px;width:3px;height:1px;background:#3a3a44"></div>
<div class="t" style="top:712.10px;font-size:13px;color:#1c1c26;right:589.00px;text-align:right;">0</div>
<div class="a" style="left:1271.0px;top:735px;width:5px;height:5px;border-radius:1.6px;background:#e0e1e6"></div>
<div class="a" style="left:1281.0px;top:738px;width:3px;height:1px;background:#3a3a44"></div>
<div class="a" style="left:1293.0px;top:735px;width:5px;height:5px;border-radius:1.6px;background:#e0e1e6"></div>
<div class="a" style="left:1303.0px;top:738px;width:3px;height:1px;background:#3a3a44"></div>
<div class="a" style="left:1315.0px;top:735px;width:5px;height:5px;border-radius:1.6px;background:#e0e1e6"></div>
<div class="a" style="left:1325.0px;top:738px;width:3px;height:1px;background:#3a3a44"></div>
<div class="t" style="top:712.10px;font-size:13px;color:#1c1c26;right:410.00px;text-align:right;">0</div>
<div class="a" style="left:1450.0px;top:735px;width:5px;height:5px;border-radius:1.6px;background:#e0e1e6"></div>
<div class="a" style="left:1460.0px;top:738px;width:3px;height:1px;background:#3a3a44"></div>
<div class="a" style="left:1472.0px;top:735px;width:5px;height:5px;border-radius:1.6px;background:#e0e1e6"></div>
<div class="a" style="left:1482.0px;top:738px;width:3px;height:1px;background:#3a3a44"></div>
<div class="a" style="left:1494.0px;top:735px;width:5px;height:5px;border-radius:1.6px;background:#e0e1e6"></div>
<div class="a" style="left:1504.0px;top:738px;width:3px;height:1px;background:#3a3a44"></div>
<div class="t" style="top:712.10px;font-size:13px;color:#1c1c26;right:230.00px;text-align:right;">2</div>
<div class="a" style="left:1630.0px;top:735px;width:5px;height:5px;border-radius:1.6px;background:#e0e1e6"></div>
<div class="a" style="left:1640.0px;top:738px;width:3px;height:1px;background:#3a3a44"></div>
<div class="a" style="left:1652.0px;top:735px;width:5px;height:5px;border-radius:1.6px;background:#e0e1e6"></div>
<div class="a" style="left:1662.0px;top:738px;width:3px;height:1px;background:#3a3a44"></div>
<div class="a" style="left:1674.0px;top:735px;width:5px;height:5px;border-radius:1.6px;background:#e0e1e6"></div>
<div class="a" style="left:1684.0px;top:738px;width:3px;height:1px;background:#3a3a44"></div>
<div class="t" style="top:712.10px;font-size:13px;color:#1c1c26;right:51.00px;text-align:right;">0</div>
<div class="a" style="left:1809.0px;top:735px;width:5px;height:5px;border-radius:1.6px;background:#e0e1e6"></div>
<div class="a" style="left:1819.0px;top:738px;width:3px;height:1px;background:#3a3a44"></div>
<div class="a" style="left:1831.0px;top:735px;width:5px;height:5px;border-radius:1.6px;background:#e0e1e6"></div>
<div class="a" style="left:1841.0px;top:738px;width:3px;height:1px;background:#3a3a44"></div>
<div class="a" style="left:1853.0px;top:735px;width:5px;height:5px;border-radius:1.6px;background:#e0e1e6"></div>
<div class="a" style="left:1863.0px;top:738px;width:3px;height:1px;background:#3a3a44"></div>
<div class="a" style="left:1892.0px;top:726px;width:1.8px;height:1.6px;background:#b3b4bb"></div>
<div class="a" style="left:1895.6px;top:726px;width:1.8px;height:1.6px;background:#b3b4bb"></div>
<div class="a" style="left:1899.2px;top:726px;width:1.8px;height:1.6px;background:#b3b4bb"></div>
<div class="a" style="left:216px;top:778px;width:3px;height:99px;background:#3fa7ee"></div>
<div class="t" style="top:796.80px;font-size:12px;color:#5d5e68;letter-spacing:0.096px;left:268.50px;">2021-10-27 00:30:16.067</div>
<div class="t" style="top:839.80px;font-size:12px;color:#1c1c26;letter-spacing:-0.200px;left:268.50px;">ID: 1634781746</div>
<div class="t" style="top:821.80px;font-size:12px;color:#1c1c26;letter-spacing:-0.135px;left:447.60px;">1635287401</div>
<div class="t" style="top:812.10px;font-size:13px;color:#1c1c26;letter-spacing:0.211px;right:1126.79px;text-align:right;">200,00 €</div>
<div class="a" style="left:733.0px;top:835px;width:5px;height:5px;border-radius:1.6px;background:#e0e1e6"></div>
<div class="a" style="left:743.0px;top:838px;width:3px;height:1px;background:#3a3a44"></div>
<div class="a" style="left:755.0px;top:835px;width:5px;height:5px;border-radius:1.6px;background:#e0e1e6"></div>
<div class="a" style="left:765.0px;top:838px;width:3px;height:1px;background:#3a3a44"></div>
<div class="a" style="left:777.0px;top:835px;width:5px;height:5px;border-radius:1.6px;background:#e0e1e6"></div>
<div class="a" style="left:787.0px;top:838px;width:3px;height:1px;background:#3a3a44"></div>
<div class="t" style="top:812.10px;font-size:13px;color:#1c1c26;right:948.00px;text-align:right;">2</div>
<div class="a" style="left:912.0px;top:835px;width:5px;height:5px;border-radius:1.6px;background:#e0e1e6"></div>
<div class="a" style="left:922.0px;top:838px;width:3px;height:1px;background:#3a3a44"></div>
<div class="a" style="left:934.0px;top:835px;width:5px;height:5px;border-radius:1.6px;background:#e0e1e6"></div>
<div class="a" style="left:944.0px;top:838px;width:3px;height:1px;background:#3a3a44"></div>
<div class="a" style="left:956.0px;top:835px;width:5px;height:5px;border-radius:1.6px;background:#e0e1e6"></div>
<div class="a" style="left:966.0px;top:838px;width:3px;height:1px;background:#3a3a44"></div>
<div class="t" style="top:812.10px;font-size:13px;color:#1c1c26;right:768.50px;text-align:right;">1</div>
<div class="a" style="left:1091.5px;top:835px;width:5px;height:5px;border-radius:1.6px;background:#e0e1e6"></div>
<div class="a" style="left:1101.5px;top:838px;width:3px;height:1px;background:#3a3a44"></div>
<div class="a" style="left:1113.5px;top:835px;width:5px;height:5px;border-radius:1.6px;background:#e0e1e6"></div>
<div class="a" style="left:1123.5px;top:838px;width:3px;height:1px;background:#3a3a44"></div>
<div class="a" style="left:1135.5px;top:835px;width:5px;height:5px;border-radius:1.6px;background:#e0e1e6"></div>
<div class="a" style="left:1145.5px;top:838px;width:3px;height:1px;background:#3a3a44"></div>
<div class="t" style="top:812.10px;font-size:13px;color:#1c1c26;right:589.00px;text-align:right;">0</div>
<div class="a" style="left:1271.0px;top:835px;width:5px;height:5px;border-radius:1.6px;background:#e0e1e6"></div>
<div class="a" style="left:1281.0px;top:838px;width:3px;height:1px;background:#3a3a44"></div>
<div class="a" style="left:1293.0px;top:835px;width:5px;height:5px;border-radius:1.6px;background:#e0e1e6"></div>
<div class="a" style="left:1303.0px;top:838px;width:3px;height:1px;background:#3a3a44"></div>
<div class="a" style="left:1315.0px;top:835px;width:5px;height:5px;border-radius:1.6px;background:#e0e1e6"></div>
<div class="a" style="left:1325.0px;top:838px;width:3px;height:1px;background:#3a3a44"></div>
<div class="t" style="top:812.10px;font-size:13px;color:#1c1c26;right:410.00px;text-align:right;">0</div>
<div class="a" style="left:1450.0px;top:835px;width:5px;height:5px;border-radius:1.6px;background:#e0e1e6"></div>
<div class="a" style="left:1460.0px;top:838px;width:3px;height:1px;background:#3a3a44"></div>
<div class="a" style="left:1472.0px;top:835px;width:5px;height:5px;border-radius:1.6px;background:#e0e1e6"></div>
<div class="a" style="left:1482.0px;top:838px;width:3px;height:1px;background:#3a3a44"></div>
<div class="a" style="left:1494.0px;top:835px;width:5px;height:5px;border-radius:1.6px;background:#e0e1e6"></div>
<div class="a" style="left:1504.0px;top:838px;width:3px;height:1px;background:#3a3a44"></div>
<div class="t" style="top:812.10px;font-size:13px;color:#1c1c26;right:230.00px;text-align:right;">2</div>
<div class="a" style="left:1630.0px;top:835px;width:5px;height:5px;border-radius:1.6px;background:#e0e1e6"></div>
<div class="a" style="left:1640.0px;top:838px;width:3px;height:1px;background:#3a3a44"></div>
<div class="a" style="left:1652.0px;top:835px;width:5px;height:5px;border-radius:1.6px;background:#e0e1e6"></div>
<div class="a" style="left:1662.0px;top:838px;width:3px;height:1px;background:#3a3a44"></div>
<div class="a" style="left:1674.0px;top:835px;width:5px;height:5px;border-radius:1.6px;background:#e0e1e6"></div>
<div class="a" style="left:1684.0px;top:838px;width:3px;height:1px;background:#3a3a44"></div>
<div class="t" style="top:812.10px;font-size:13px;color:#1c1c26;right:51.00px;text-align:right;">0</div>
<div class="a" style="left:1809.0px;top:835px;width:5px;height:5px;border-radius:1.6px;background:#e0e1e6"></div>
<div class="a" style="left:1819.0px;top:838px;width:3px;height:1px;background:#3a3a44"></div>
<div class="a" style="left:1831.0px;top:835px;width:5px;height:5px;border-radius:1.6px;background:#e0e1e6"></div>
<div class="a" style="left:1841.0px;top:838px;width:3px;height:1px;background:#3a3a44"></div>
<div class="a" style="left:1853.0px;top:835px;width:5px;height:5px;border-radius:1.6px;background:#e0e1e6"></div>
<div class="a" style="left:1863.0px;top:838px;width:3px;height:1px;background:#3a3a44"></div>
<div class="a" style="left:1892.0px;top:826px;width:1.8px;height:1.6px;background:#b3b4bb"></div>
<div class="a" style="left:1895.6px;top:826px;width:1.8px;height:1.6px;background:#b3b4bb"></div>
<div class="a" style="left:1899.2px;top:826px;width:1.8px;height:1.6px;background:#b3b4bb"></div>
<div class="a" style="left:216px;top:878px;width:3px;height:22px;background:#82d9a6"></div>
<div class="a" style="left:220px;top:890px;width:218px;height:10px;overflow:hidden"><div class="t" style="left:48.5px;top:7px;font-size:12px;color:#6d6e78;letter-spacing:-.12px">2021-10-27 07:55:04.139</div></div>
<div class="a" style="left:216px;top:900px;width:403px;height:41px;background:#fff"></div>
<div class="hl" style="left:216px;top:900px;width:1702px;background:#eeeff0"></div>
<div class="t" style="top:916.70px;font-size:12px;color:#5d5e68;letter-spacing:0.151px;right:1306.85px;text-align:right;">Total (Tous les éléments)</div>
<div class="t" style="top:907.20px;font-size:13px;color:#1c1c26;letter-spacing:-0.035px;right:1127.04px;text-align:right;">30 555,00 €</div>
<div class="t" style="top:928.05px;font-size:10.3px;color:#1c1c26;letter-spacing:-0.200px;right:1127.20px;text-align:right;"><span style="color:#2a2a38;">31 812,70 €</span><span style="color:#b4525c;margin-left:14.5px;">-1 257,70 €</span><span style="color:#b4525c;margin-left:14.5px;">-4,0 %</span></div>
<div class="t" style="top:907.20px;font-size:13px;color:#1c1c26;letter-spacing:-0.749px;right:948.75px;text-align:right;">1 487</div>
<div class="t" style="top:928.05px;font-size:10.3px;color:#1c1c26;letter-spacing:-0.200px;right:948.20px;text-align:right;"><i style="display:inline-block;width:5.5px;height:4.5px;border-radius:2px;background:#dfe0e5;margin:0 5.5px 1px 9.5px;vertical-align:middle"></i><span style="color:#2a2a38;">1 616</span><i style="display:inline-block;width:5.5px;height:4.5px;border-radius:2px;background:#dfe0e5;margin:0 5.5px 1px 9.5px;vertical-align:middle"></i><span style="color:#b4525c;">-129</span><i style="display:inline-block;width:5.5px;height:4.5px;border-radius:2px;background:#dfe0e5;margin:0 5.5px 1px 9.5px;vertical-align:middle"></i><span style="color:#b4525c;">-8,0 %</span></div>
<div class="t" style="top:907.20px;font-size:13px;color:#1c1c26;letter-spacing:-0.300px;right:768.80px;text-align:right;">396</div>
<div class="t" style="top:928.05px;font-size:10.3px;color:#1c1c26;letter-spacing:-0.200px;right:768.70px;text-align:right;"><i style="display:inline-block;width:5.5px;height:4.5px;border-radius:2px;background:#dfe0e5;margin:0 5.5px 1px 9.5px;vertical-align:middle"></i><span style="color:#2a2a38;">416</span><i style="display:inline-block;width:5.5px;height:4.5px;border-radius:2px;background:#dfe0e5;margin:0 5.5px 1px 9.5px;vertical-align:middle"></i><span style="color:#b4525c;">-20</span><i style="display:inline-block;width:5.5px;height:4.5px;border-radius:2px;background:#dfe0e5;margin:0 5.5px 1px 9.5px;vertical-align:middle"></i><span style="color:#b4525c;">-4,8 %</span></div>
<div class="t" style="top:907.20px;font-size:13px;color:#1c1c26;letter-spacing:-0.300px;right:589.30px;text-align:right;">201</div>
<div class="t" style="top:928.05px;font-size:10.3px;color:#1c1c26;letter-spacing:-0.200px;right:589.20px;text-align:right;"><i style="display:inline-block;width:5.5px;height:4.5px;border-radius:2px;background:#dfe0e5;margin:0 5.5px 1px 9.5px;vertical-align:middle"></i><span style="color:#2a2a38;">217</span><i style="display:inline-block;width:5.5px;height:4.5px;border-radius:2px;background:#dfe0e5;margin:0 5.5px 1px 9.5px;vertical-align:middle"></i><span style="color:#b4525c;">-16</span><i style="display:inline-block;width:5.5px;height:4.5px;border-radius:2px;background:#dfe0e5;margin:0 5.5px 1px 9.5px;vertical-align:middle"></i><span style="color:#b4525c;">-7,4 %</span></div>
<div class="t" style="top:907.20px;font-size:13px;color:#1c1c26;letter-spacing:-0.300px;right:410.30px;text-align:right;">104</div>
<div class="t" style="top:928.05px;font-size:10.3px;color:#1c1c26;letter-spacing:-0.200px;right:410.20px;text-align:right;"><i style="display:inline-block;width:5.5px;height:4.5px;border-radius:2px;background:#dfe0e5;margin:0 5.5px 1px 9.5px;vertical-align:middle"></i><span style="color:#2a2a38;">122</span><i style="display:inline-block;width:5.5px;height:4.5px;border-radius:2px;background:#dfe0e5;margin:0 5.5px 1px 9.5px;vertical-align:middle"></i><span style="color:#b4525c;">-18</span><i style="display:inline-block;width:5.5px;height:4.5px;border-radius:2px;background:#dfe0e5;margin:0 5.5px 1px 9.5px;vertical-align:middle"></i><span style="color:#b4525c;">-14,8 %</span></div>
<div class="t" style="top:907.20px;font-size:13px;color:#1c1c26;letter-spacing:-0.300px;right:230.30px;text-align:right;">431</div>
<div class="t" style="top:928.05px;font-size:10.3px;color:#1c1c26;letter-spacing:-0.200px;right:230.20px;text-align:right;"><i style="display:inline-block;width:5.5px;height:4.5px;border-radius:2px;background:#dfe0e5;margin:0 5.5px 1px 9.5px;vertical-align:middle"></i><span style="color:#2a2a38;">466</span><i style="display:inline-block;width:5.5px;height:4.5px;border-radius:2px;background:#dfe0e5;margin:0 5.5px 1px 9.5px;vertical-align:middle"></i><span style="color:#b4525c;">-35</span><i style="display:inline-block;width:5.5px;height:4.5px;border-radius:2px;background:#dfe0e5;margin:0 5.5px 1px 9.5px;vertical-align:middle"></i><span style="color:#b4525c;">-7,5 %</span></div>
<div class="t" style="top:907.20px;font-size:13px;color:#1c1c26;letter-spacing:-0.300px;right:51.30px;text-align:right;">32</div>
<div class="t" style="top:928.05px;font-size:10.3px;color:#1c1c26;letter-spacing:-0.200px;right:51.20px;text-align:right;"><i style="display:inline-block;width:5.5px;height:4.5px;border-radius:2px;background:#dfe0e5;margin:0 5.5px 1px 9.5px;vertical-align:middle"></i><span style="color:#2a2a38;">48</span><i style="display:inline-block;width:5.5px;height:4.5px;border-radius:2px;background:#dfe0e5;margin:0 5.5px 1px 9.5px;vertical-align:middle"></i><span style="color:#b4525c;">-16</span><i style="display:inline-block;width:5.5px;height:4.5px;border-radius:2px;background:#dfe0e5;margin:0 5.5px 1px 9.5px;vertical-align:middle"></i><span style="color:#b4525c;">-33,3 %</span></div>
</section></main>
<div class="a" style="left:1914px;top:45px;width:3px;height:288px;background:#c8c8ca"></div>
</body></html>
